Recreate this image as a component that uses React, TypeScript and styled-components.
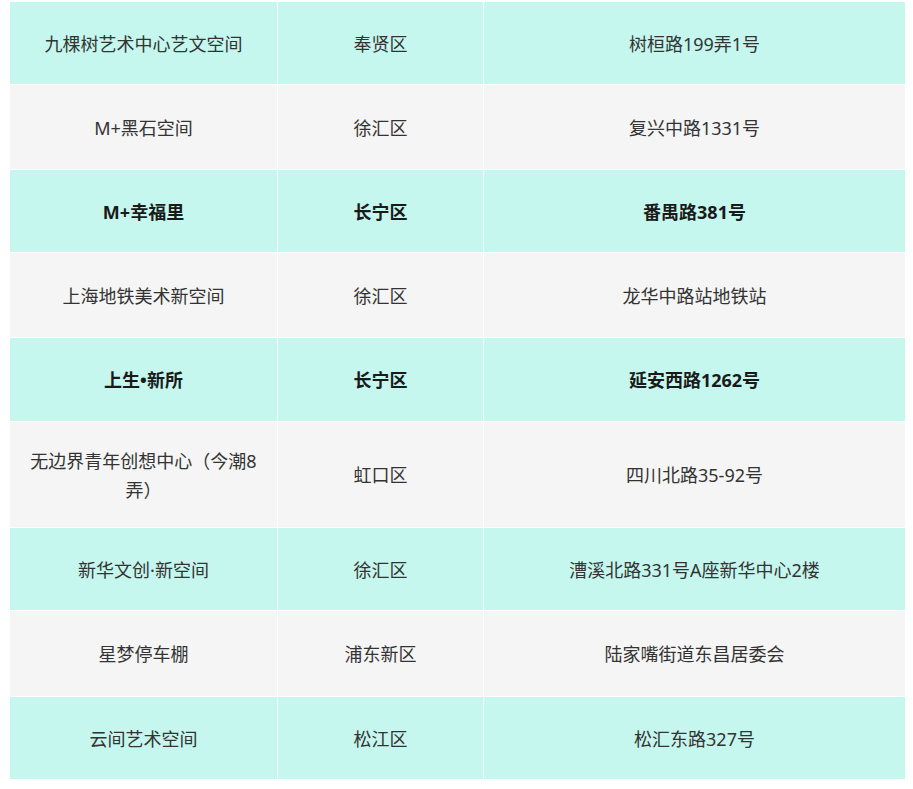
import React from "react";
import styled, { createGlobalStyle } from "styled-components";

const Global = createGlobalStyle`
  html, body { margin: 0; padding: 0; background: #ffffff; }
  body { font-family: "Noto Sans", "Noto Sans CJK SC", sans-serif; }
`;

const Wrap = styled.div`
  padding: 1px 0 0 9px;
`;

const Table = styled.table`
  width: 897px;
  border-collapse: separate;
  border-spacing: 1px;
  table-layout: fixed;
`;

const Row = styled.tr<{ $alt: boolean; $bold: boolean; $h: number }>`
  height: ${(p) => p.$h}px;
  background: ${(p) => (p.$alt ? "#f5f5f5" : "#c5f7ee")};
  color: ${(p) => (p.$bold ? "#1a1a1a" : "#333333")};
  font-weight: ${(p) => (p.$bold ? 700 : 400)};
`;

const Cell = styled.td<{ $w: number }>`
  width: ${(p) => p.$w}px;
  padding: 2px 15px 0;
  box-sizing: border-box;
  text-align: center;
  vertical-align: middle;
  font-size: 18px;
  line-height: 29px;
  font-family: "Noto Sans", "Noto Sans CJK SC", sans-serif;
`;

const rows: { name: string; district: string; addr: string; h: number; bold?: boolean }[] = [
  { name: "九棵树艺术中心艺文空间", district: "奉贤区", addr: "树桓路199弄1号", h: 82 },
  { name: "M+黑石空间", district: "徐汇区", addr: "复兴中路1331号", h: 84 },
  { name: "M+幸福里", district: "长宁区", addr: "番禺路381号", h: 82, bold: true },
  { name: "上海地铁美术新空间", district: "徐汇区", addr: "龙华中路站地铁站", h: 84 },
  { name: "上生•新所", district: "长宁区", addr: "延安西路1262号", h: 83, bold: true },
  { name: "无边界青年创想中心（今潮8弄）", district: "虹口区", addr: "四川北路35-92号", h: 105 },
  { name: "新华文创·新空间", district: "徐汇区", addr: "漕溪北路331号A座新华中心2楼", h: 82 },
  { name: "星梦停车棚", district: "浦东新区", addr: "陆家嘴街道东昌居委会", h: 85 },
  { name: "云间艺术空间", district: "松江区", addr: "松汇东路327号", h: 82 },
];

export default function App() {
  return (
    <>
      <Global />
      <Wrap>
        <Table>
          <tbody>
            {rows.map((r, i) => (
              <Row key={i} $alt={i % 2 === 1} $bold={!!r.bold} $h={r.h}>
                <Cell $w={267}>{r.name}</Cell>
                <Cell $w={205}>{r.district}</Cell>
                <Cell $w={421}>{r.addr}</Cell>
              </Row>
            ))}
          </tbody>
        </Table>
      </Wrap>
    </>
  );
}
